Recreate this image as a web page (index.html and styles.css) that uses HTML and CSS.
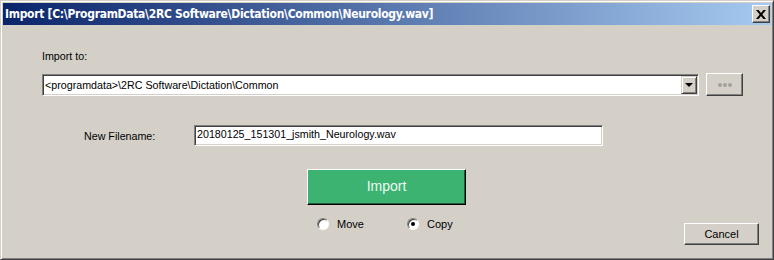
FILE: index.html
```html
<!DOCTYPE html>
<html lang="en">
<head>
	<meta charset="UTF-8">
	<title>Import</title>
	<link rel="stylesheet" href="styles.css">
</head>
<body>
<div class="window">
  <div class="titlebar">
    <span class="title">Import [C:\ProgramData\2RC Software\Dictation\Common\Neurology.wav]</span>
    <span class="close">
      <svg width="10" height="9" viewBox="0 0 10 9"><path d="M0 0h2.6l2.4 2.9L7.4 0H10L6.3 4.5 10 9H7.4L5 6.1 2.6 9H0l3.7-4.5z" fill="#000"/></svg>
    </span>
  </div>
  <div class="content">
    <div class="label">Import to:</div>
    <div class="pathrow">
      <div class="combo">
        <span class="combotext">&lt;programdata&gt;\2RC Software\Dictation\Common</span>
        <span class="dropbtn"><i></i></span>
      </div>
      <div class="btn browse"><b></b><b></b><b></b></div>
    </div>
    <div class="namerow">
      <span class="namelabel">New Filename:</span>
      <div class="textbox">20180125_151301_jsmith_Neurology.wav</div>
    </div>
    <div class="importbtn">Import</div>
    <div class="bottomrow">
      <div class="radios">
        <label class="radio"><span class="dot"></span>Move</label>
        <label class="radio checked"><span class="dot"></span>Copy</label>
      </div>
      <div class="btn cancel">Cancel</div>
    </div>
  </div>
</div>
</body>
</html>
```

FILE: styles.css
```css
html, body {
  margin: 0;
  background: #d4d0c8;
}

/* window frame */
.window {
  box-sizing: border-box;
  width: 774px;
  height: 260px;
  padding: 2px;
  border: 1px solid;
  border-color: #d4d0c8 #404040 #404040 #d4d0c8;
  box-shadow: inset 1px 1px #fff, inset -1px -1px #808080;
  background: #d4d0c8;
  font-family: "Liberation Sans", Arial, sans-serif;
  font-size: 10.7px;
  color: #000;
}

.titlebar {
  display: flex;
  align-items: center;
  height: 22px;
  background: linear-gradient(to right, #0a246a, #a6caf0);
}

.title {
  flex: 1;
  padding-left: 2px;
  color: #fff;
  font-family: "DejaVu Sans Condensed", "DejaVu Sans", sans-serif;
  font-stretch: condensed;
  font-weight: bold;
  font-size: 12px;
  letter-spacing: -0.3px;
  white-space: nowrap;
}

.close {
  display: flex;
  align-items: center;
  justify-content: center;
  box-sizing: border-box;
  width: 18px;
  height: 18px;
  margin-right: 1px;
  background: #d4d0c8;
  border: 1px solid;
  border-color: #fff #404040 #404040 #fff;
  box-shadow: inset -1px -1px #808080;
}

.content {
  padding: 25px 12px 0 39px;
}

.label {
  height: 13px;
  line-height: 13px;
}

/* combo box row */
.pathrow {
  display: flex;
  align-items: flex-start;
  margin-top: 11px;
}

.combo {
  display: flex;
  align-items: center;
  box-sizing: border-box;
  width: 657px;
  height: 22px;
  padding: 0 1px;
  border: 1px solid;
  border-color: #808080 #fff #fff #808080;
  box-shadow: inset 1px 1px #404040, inset -1px -1px #d4d0c8;
  background: #fff;
}

.combotext {
  flex: 1;
  padding-left: 1px;
}

.dropbtn {
  display: flex;
  align-items: center;
  justify-content: center;
  box-sizing: border-box;
  width: 16px;
  height: 18px;
  background: #d4d0c8;
  border: 1px solid;
  border-color: #d4d0c8 #404040 #404040 #d4d0c8;
  box-shadow: inset 1px 1px #fff, inset -1px -1px #808080;
}

.dropbtn i {
  width: 0;
  height: 0;
  border-left: 4px solid transparent;
  border-right: 4px solid transparent;
  border-top: 4px solid #000;
}

.btn {
  display: flex;
  align-items: center;
  justify-content: center;
  box-sizing: border-box;
  background: #d4d0c8;
  border: 1px solid;
  border-color: #fff #404040 #404040 #fff;
  box-shadow: inset -1px -1px #808080;
}

.browse {
  gap: 1px;
  width: 37px;
  height: 23px;
  margin-left: 7px;
  margin-top: -1px;
}

.browse b {
  width: 4px;
  height: 4px;
  border-radius: 50%;
  background: #a3a19c;
}

/* filename row */
.namerow {
  display: flex;
  align-items: center;
  margin-top: 29px;
  padding-left: 42px;
}

.namelabel {
  width: 110px;
}

.textbox {
  box-sizing: border-box;
  width: 409px;
  height: 21px;
  line-height: 17px;
  padding-left: 2px;
  border: 1px solid;
  border-color: #808080 #fff #fff #808080;
  box-shadow: inset 1px 1px #404040, inset -1px -1px #d4d0c8;
  background: #fff;
}

/* big green button */
.importbtn {
  box-sizing: border-box;
  width: 159px;
  height: 36px;
  margin: 23px 0 0 265px;
  line-height: 32px;
  text-align: center;
  background: #3cb371;
  color: #eef8f2;
  font-size: 14px;
  border: 1px solid;
  border-color: #fff #000 #000 #fff;
  box-shadow: inset -1px -1px #1f5a39;
}

.bottomrow {
  display: flex;
  align-items: flex-start;
  margin-top: 12px;
}

.radios {
  display: flex;
  margin-left: 275px;
}

.radio {
  display: flex;
  align-items: center;
  height: 13px;
  width: 90px;
  font-size: 11px;
}

.dot {
  box-sizing: border-box;
  width: 12px;
  height: 12px;
  margin-right: 8px;
  border-radius: 50%;
  border: 1px solid;
  border-color: #808080 #fff #fff #808080;
  box-shadow: inset 1px 1px #404040;
  background: #fff;
  display: flex;
  align-items: center;
  justify-content: center;
}

.radio.checked .dot::after {
  content: "";
  width: 4px;
  height: 4px;
  border-radius: 50%;
  background: #000;
}

.cancel {
  width: 75px;
  height: 22px;
  margin: 6px 0 0 auto;
  font-size: 11px;
}
```
